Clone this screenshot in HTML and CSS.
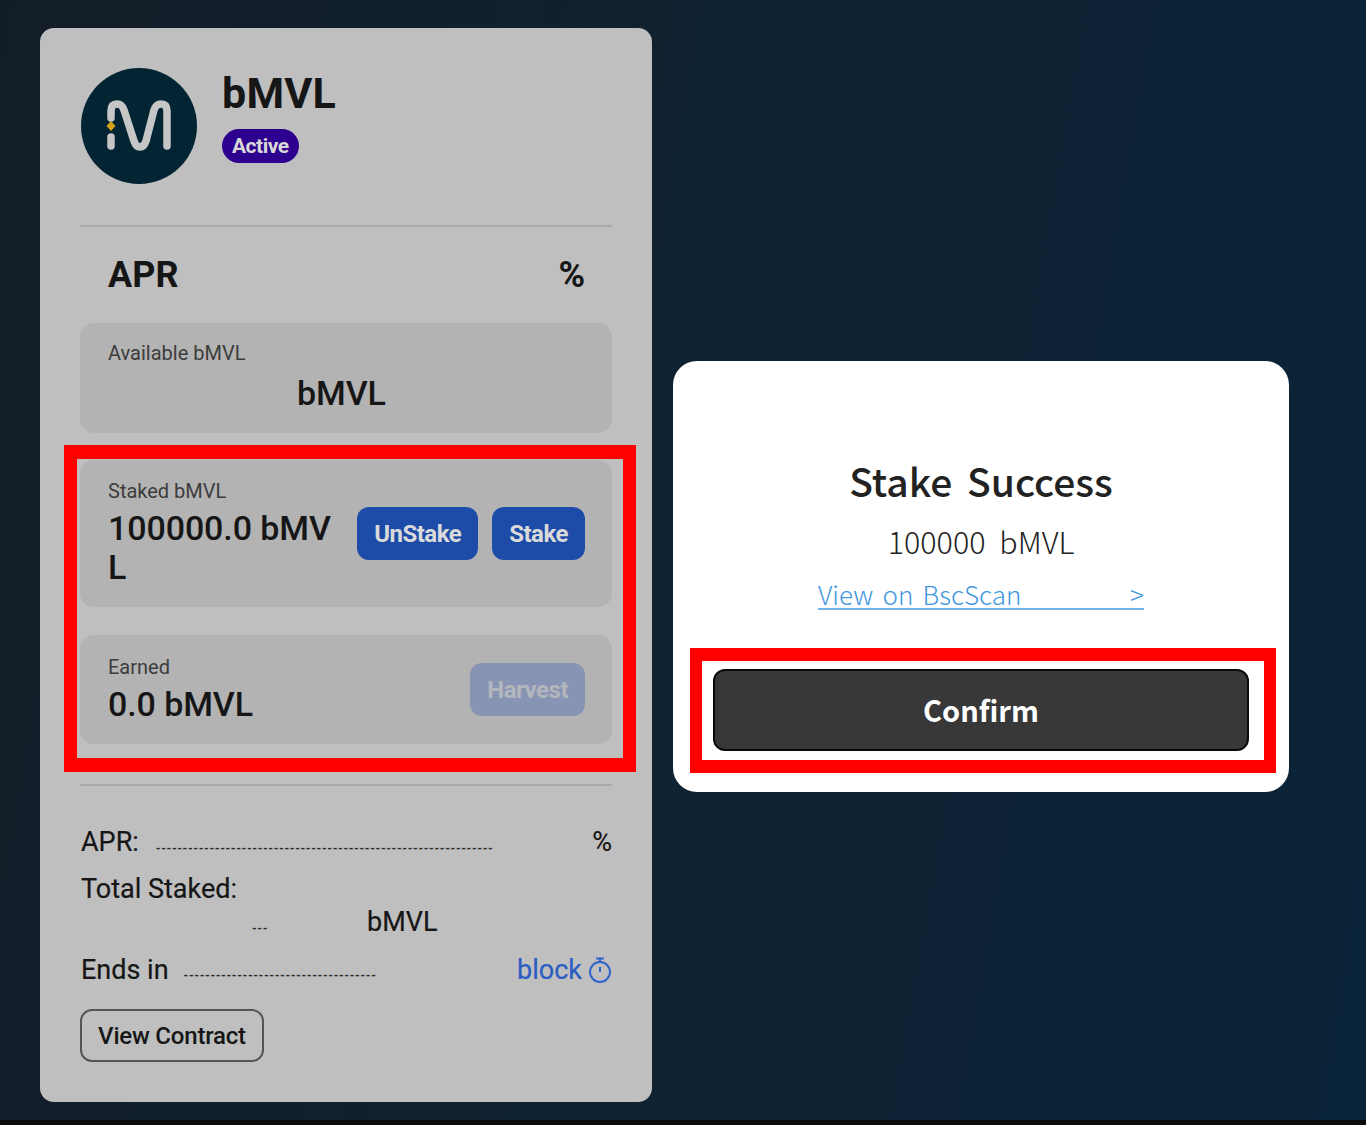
FILE: index.html
```html
<!DOCTYPE html>
<html>
<head>
    <title>Stake Success</title>
    <link rel="stylesheet" href="styles.css">
</head>
<body>
    <div class="page">
        <div class="pool-card">
            <div class="pool-head">
                <svg class="pool-logo" viewBox="0 0 118 116">
                    <circle cx="59" cy="58" r="58" fill="#022433"/>
                    <path d="M31 50 V43 Q31 36 37 36 Q42 36 44 42 L54 73 Q56 79 60 79 Q64 79 66 73 L74 42 Q76 36 81 36 Q87 36 87 43 V78" fill="none" stroke="#c6c6c6" stroke-width="7.5" stroke-linecap="round" stroke-linejoin="round"/>
                    <path d="M31 69 V78" fill="none" stroke="#c6c6c6" stroke-width="7.5" stroke-linecap="round"/>
                    <path d="M31 53 L35.5 58 L31 63 L26.5 58 Z" fill="#d6a419"/>
                </svg>
                <div class="pool-title">
                    <h1>bMVL</h1>
                    <span class="badge">Active</span>
                </div>
            </div>

            <div class="apr-row">
                <span>APR</span>
                <span>%</span>
            </div>

            <div class="box box-available">
                <div class="box-label">Available bMVL</div>
                <div class="box-amount centered">bMVL</div>
            </div>

            <div class="box box-staked">
                <div class="box-text">
                    <div class="box-label">Staked bMVL</div>
                    <div class="box-amount">100000.0 bMV<br>L</div>
                </div>
                <div class="box-actions">
                    <button class="btn">UnStake</button>
                    <button class="btn">Stake</button>
                </div>
            </div>

            <div class="box box-earned">
                <div class="box-text">
                    <div class="box-label">Earned</div>
                    <div class="box-amount">0.0 bMVL</div>
                </div>
                <button class="btn btn-disabled">Harvest</button>
            </div>

            <div class="pool-info">
                <div class="info-row">
                    <span>APR:</span>
                    <span class="dashes dashes-line">---------------------------------------------------------------</span>
                    <span class="info-end">%</span>
                </div>
                <div class="info-row info-label">
                    <span>Total Staked:</span>
                </div>
                <div class="info-row info-total">
                    <span class="dashes">---</span>
                    <span>bMVL</span>
                </div>
                <div class="info-row">
                    <span>Ends in</span>
                    <span class="dashes dashes-line dashes-ends">------------------------------------</span>
                    <span class="info-end info-block">block
                        <svg class="timer" viewBox="0 0 24 26" fill="none" stroke="#2f63c9" stroke-width="2">
                            <circle cx="12" cy="15" r="10"/>
                            <path d="M8 1.5 H16 M12 1.5 V5 M12 15 V10"/>
                        </svg>
                    </span>
                </div>
            </div>

            <button class="contract-btn">View Contract</button>

            <div class="highlight highlight-boxes"></div>
        </div>

        <div class="modal">
            <h2>Stake Success</h2>
            <p class="modal-amount">100000 bMVL</p>
            <a class="modal-link" href="#"><span>View on BscScan</span><span>&gt;</span></a>
            <button class="confirm-btn">Confirm</button>
            <div class="highlight highlight-confirm"></div>
        </div>
    </div>
</body>
</html>
```

FILE: styles.css
```css
* {
    box-sizing: border-box;
}
html, body {
    margin: 0;
    padding: 0;
    background-color: #0a0a0a;
}
body {
    height: 1125px;
    overflow: hidden;
    font-family: Roboto, Arial, sans-serif;
    color: #161616;
}
.page {
    height: 1120px;
    padding: 28px 0 0 40px;
    display: flex;
    align-items: flex-start;
    gap: 21px;
    background: linear-gradient(100deg, #131d27 0%, #0f2231 50%, #0a2439 100%);
}

/* left card */
.pool-card {
    position: relative;
    width: 612px;
    height: 1074px;
    padding: 40px;
    background-color: #bfbfbf;
    border-radius: 14px;
}
.pool-head {
    display: flex;
    gap: 24px;
    height: 159px;
    border-bottom: 2px solid #a9a9a9;
}
.pool-logo {
    width: 118px;
    height: 116px;
}
.pool-title h1 {
    margin: 0;
    font-size: 43px;
    line-height: 50px;
    font-weight: 700;
    letter-spacing: 0.2px;
}
.badge {
    display: inline-block;
    margin-top: 11px;
    height: 34px;
    padding: 0 10px;
    line-height: 34px;
    border-radius: 17px;
    background-color: #2e0090;
    color: #d8d8d8;
    font-size: 21px;
    font-weight: 700;
    letter-spacing: -0.5px;
}
.apr-row {
    display: flex;
    justify-content: space-between;
    align-items: center;
    height: 96px;
    padding: 0 27px 0 28px;
    font-size: 36px;
    font-weight: 700;
}
.box {
    background-color: #b3b3b3;
    border-radius: 14px;
    padding: 19px 27px 0 28px;
}
.box-available {
    height: 110px;
}
.box-staked {
    display: flex;
    justify-content: space-between;
    align-items: center;
    height: 147px;
    margin-top: 27px;
    padding-top: 0;
}
.box-earned {
    display: flex;
    justify-content: space-between;
    align-items: center;
    height: 109px;
    margin-top: 28px;
    padding-top: 0;
}
.box-label {
    font-size: 20px;
    line-height: 23px;
    color: #3c3c3c;
}
.box-amount {
    font-size: 34px;
    line-height: 39px;
    font-weight: 500;
    margin-top: 6px;
    letter-spacing: -0.1px;
}
.box-amount.centered {
    text-align: center;
    margin-top: 9px;
    padding-right: 10px;
}
.box-actions {
    display: flex;
    gap: 14px;
}
.btn {
    height: 53px;
    padding: 0 17px;
    border: none;
    border-radius: 12px;
    background-color: #1c4ca8;
    color: #dadada;
    font-family: Roboto, Arial, sans-serif;
    font-size: 24px;
    font-weight: 700;
    letter-spacing: -0.5px;
}
.btn-disabled {
    background-color: #8894b3;
    color: #b3b6bd;
}
.pool-info {
    margin-top: 40px;
    padding: 40px 0 0 1px;
    border-top: 2px solid #a9a9a9;
    font-size: 27px;
}
.info-row {
    display: flex;
    align-items: baseline;
    height: 47px;
    line-height: 32px;
    -webkit-text-stroke: 0.2px #161616;
}
.info-end {
    margin-left: auto;
}
.info-label {
    height: 33px;
}
.info-total {
    height: 33px;
    padding-left: 171px;
    gap: 99px;
    margin-bottom: 15px;
}
.dashes {
    align-self: flex-start;
    margin-top: 7px;
    font-size: 12px;
    font-weight: 700;
    letter-spacing: 0.63px;
    white-space: nowrap;
    color: #2c2c2c;
    -webkit-text-stroke: 0;
}
.dashes-line {
    margin-left: 17px;
}
.dashes-ends {
    margin-left: 15px;
    margin-top: 6px;
}
.info-block {
    display: flex;
    align-items: center;
    gap: 6px;
    color: #2a5cc4;
    -webkit-text-stroke: 0.2px #2a5cc4;
}
.timer {
    width: 24px;
    height: 26px;
}
.contract-btn {
    display: block;
    margin-top: 8px;
    width: 184px;
    height: 53px;
    background: transparent;
    border: 2px solid #555555;
    border-radius: 12px;
    color: #161616;
    font-family: Roboto, Arial, sans-serif;
    font-size: 24px;
    font-weight: 500;
    letter-spacing: -0.2px;
    padding: 0;
}

/* right modal */
.modal {
    position: relative;
    margin-top: 333px;
    width: 616px;
    height: 431px;
    padding-top: 94px;
    background-color: #ffffff;
    border-radius: 24px;
    text-align: center;
    font-family: "Noto Sans CJK KR", "Noto Sans", sans-serif;
}
.modal h2 {
    margin: 0;
    font-size: 39px;
    line-height: 50px;
    font-weight: 500;
    word-spacing: 6px;
    color: #222222;
}
.modal-amount {
    margin: 16px 0 0;
    font-size: 30.5px;
    line-height: 40px;
    font-weight: 300;
    word-spacing: 7px;
    color: #222222;
}
.modal-link {
    display: flex;
    justify-content: space-between;
    width: 326px;
    margin: 19px auto 0;
    font-size: 26px;
    line-height: 28px;
    font-weight: 300;
    word-spacing: 3.5px;
    color: #3f97e0;
    text-decoration: none;
    border-bottom: 2px solid #6fb3e8;
}
.confirm-btn {
    display: block;
    width: 536px;
    height: 82px;
    margin: 59px auto 0;
    padding-bottom: 3px;
    background-color: #383838;
    border: 2px solid #0a0a0a;
    border-radius: 12px;
    color: #ffffff;
    font-family: "Noto Sans CJK KR", "Noto Sans", sans-serif;
    font-size: 29px;
    font-weight: 700;
}

/* red annotation boxes */
.highlight {
    position: absolute;
    border-style: solid;
    border-color: #ff0000;
    pointer-events: none;
}
.highlight-boxes {
    left: 24px;
    top: 417px;
    width: 572px;
    height: 327px;
    border-width: 14px 13px;
}
.highlight-confirm {
    left: 17px;
    top: 287px;
    width: 586px;
    height: 125px;
    border-width: 13px 12px;
}
```
